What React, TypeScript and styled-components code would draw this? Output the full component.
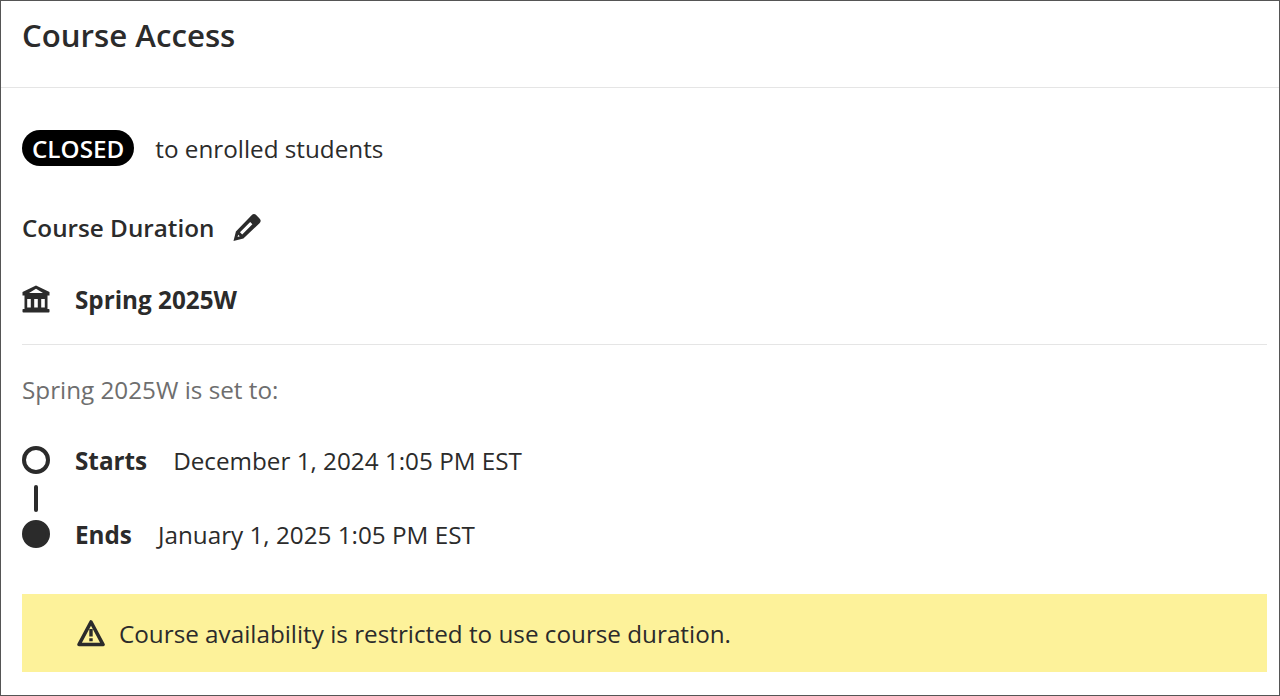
import React from "react";
import styled, { createGlobalStyle } from "styled-components";

const Global = createGlobalStyle`
  html, body { margin: 0; padding: 0; background: #fff; }
  body { font-family: "Open Sans", sans-serif; color: #2b2b2b; }
`;
const Frame = styled.div`
  width: 1280px; height: 696px; box-sizing: border-box; border: 1px solid #555; overflow: hidden; display: flex; flex-direction: column;
`;
const Header = styled.header`
  height: 87px; flex: none; box-sizing: border-box; border-bottom: 1px solid #e5e5e5; padding: 14px 21px 0;
`;
const Title = styled.h1`
  margin: 0; font-size: 31.2px; line-height: 40px; font-weight: 600; color: #2b2b2b;
`;
const Body = styled.main`
  padding: 0 12px 0 21px; display: flex; flex-direction: column; font-size: 24.25px;
`;
const StatusRow = styled.div`
  display: flex; align-items: center; gap: 21px; height: 36px; margin-top: 42px;
`;
const Pill = styled.span`
  background: #000; color: #fff; border-radius: 18px; height: 36px; padding: 0 10px; display: flex; align-items: center; font-weight: 600;
`;
const DurationRow = styled.div`
  display: flex; align-items: center; gap: 18px; margin-top: 41px; height: 40px; font-weight: 600;
`;
const TermRow = styled.div`
  display: flex; align-items: center; gap: 25px; margin-top: 32px; height: 40px; padding-bottom: 25px; font-weight: 700; border-bottom: 1px solid #e5e5e5;
`;
const Note = styled.div`
  margin-top: 25px; height: 40px; line-height: 40px; color: #6e6e6e;
`;
const Dates = styled.div`
  display: grid; grid-template-columns: 28px 1fr; column-gap: 25px; margin-top: 30px;
`;
const Marker = styled.span<{ $filled?: boolean }>`
  width: 28px; height: 28px; box-sizing: border-box; border-radius: 50%; border: 4px solid #2b2b2b; background: ${(p) => (p.$filled ? "#2b2b2b" : "#fff")}; align-self: center;
`;
const Connector = styled.span`
  width: 4px; height: 27px; border-radius: 2px; background: #2b2b2b; justify-self: center; margin: 5px 0 2px;
`;
const Empty = styled.span``;
const DateRow = styled.div<{ $gap: number }>`
  display: flex; align-items: center; gap: ${(p) => p.$gap}px; height: 40px;
  strong { font-weight: 700; }
`;
const Banner = styled.div`
  margin-top: 40px; height: 78px; background: #fdf29a; display: flex; align-items: center; gap: 14px; padding-left: 55px;
`;

export default function App() {
  return (
    <>
      <Global />
      <Frame>
        <Header><Title>Course Access</Title></Header>
        <Body>
          <StatusRow><Pill>CLOSED</Pill><span>to enrolled students</span></StatusRow>
          <DurationRow>
            <span>Course Duration</span>
            <svg width="30" height="30" viewBox="0 0 30 30"><path fill="#2b2b2b" fillRule="evenodd" d="M1.5 29l2.4-9.6L19.6 3.3a3.4 3.4 0 0 1 4.8 0l3.1 3.1a3.4 3.4 0 0 1 0 4.8L11.4 26.6zM8 20.3l2.2 2.2 10.2-10.3-2.2-2.2zM5.6 24.9l2.2-.6-1.6-1.6z"/></svg>
          </DurationRow>
          <TermRow>
            <svg width="28" height="28" viewBox="0 0 28 28"><path fill="#2b2b2b" fillRule="evenodd" d="M14 0.5L27.5 7v3.5H0.5V7zM14 3.8L7 8h14z"/><path fill="#2b2b2b" fillRule="evenodd" d="M2.5 10h23v14.5h-23zM5.2 14v8.5h3.6V14zM12.2 14v8.5h3.6V14zM19.2 14v8.5h3.6V14z"/><rect x="0.5" y="24" width="27" height="3.6" rx="0.8" fill="#2b2b2b"/></svg>
            <span>Spring 2025W</span>
          </TermRow>
          <Note>Spring 2025W is set to:</Note>
          <Dates>
            <Marker />
            <DateRow $gap={26}><strong>Starts</strong><span>December 1, 2024 1:05 PM EST</span></DateRow>
            <Connector /><Empty />
            <Marker $filled />
            <DateRow $gap={26}><strong>Ends</strong><span>January 1, 2025 1:05 PM EST</span></DateRow>
          </Dates>
          <Banner>
            <svg width="28" height="28" viewBox="0 0 28 28" fill="none" stroke="#2b2b2b" strokeWidth="3.6" strokeLinejoin="round"><path d="M14 3L26 25.5H2z"/><path d="M14 10v7.5M14 19.3v3" strokeWidth="3.4"/></svg>
            <span>Course availability is restricted to use course duration.</span>
          </Banner>
        </Body>
      </Frame>
    </>
  );
}
